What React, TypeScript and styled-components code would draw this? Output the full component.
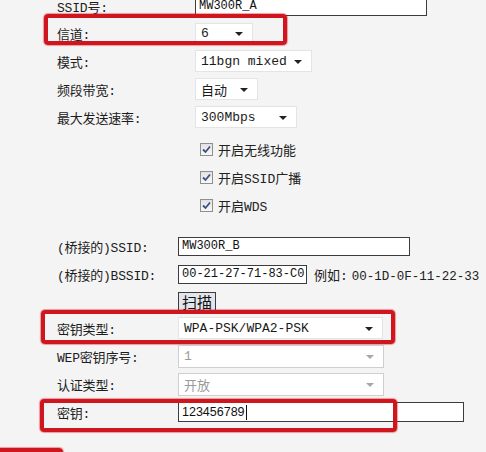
import React from 'react';
import styled, { createGlobalStyle, css } from 'styled-components';

const GlobalStyle = createGlobalStyle`
  html, body {
    margin: 0;
    padding: 0;
    background: #f4f4f4;
    overflow: hidden;
  }
  body {
    font-family: "Liberation Mono", "Noto Sans CJK SC", monospace;
    color: #222;
  }
`;

const Page = styled.div`
  width: 486px;
  height: 452px;
  overflow: hidden;
  background: #f4f4f4;
`;

const Section = styled.div<{ $top: number }>`
  margin-top: ${p => p.$top}px;
`;

interface IHighlight {
  left: number;
  top: number;
  width: number;
  height: number;
}

const highlightBox = (hl: IHighlight) => css`
  content: '';
  position: absolute;
  left: ${hl.left}px;
  top: ${hl.top}px;
  width: ${hl.width}px;
  height: ${hl.height}px;
  box-sizing: border-box;
  border: 4px solid #cf161f;
  border-radius: 4px;
  box-shadow: 0 0 1px 1px rgba(207, 22, 31, 0.4);
  pointer-events: none;
`;

const Row = styled.div<{ $h?: number; $labelW: number; $hl?: IHighlight }>`
  position: relative;
  display: grid;
  grid-template-columns: ${p => p.$labelW}px 1fr;
  align-items: center;
  height: ${p => p.$h ?? 28}px;
  padding-left: 57px;

  ${({ $hl }) => $hl ? css`
    &::after {
      ${highlightBox($hl)}
    }
  ` : ''}
`;

const Label = styled.span`
  font-size: 13px;
  white-space: nowrap;
  color: #1c1c1c;
  letter-spacing: -0.2px;
`;

const Control = styled.div`
  display: flex;
  align-items: center;
`;

const SelectBox = styled.div<{ $w: number; $h?: number; $disabled?: boolean }>`
  width: ${p => p.$w}px;
  height: ${p => p.$h ?? 22}px;
  box-sizing: border-box;
  display: flex;
  align-items: center;
  justify-content: space-between;
  padding: 0 9px 0 5px;
  background: #fff;
  border: 1px solid ${p => p.$disabled ? '#cfcfcf' : '#e4e4e4'};
  font-size: 13px;
  color: ${p => p.$disabled ? '#9a9a9a' : '#1a1a1a'};
  white-space: nowrap;
`;

const Arrow = styled.span<{ $disabled?: boolean }>`
  width: 0;
  height: 0;
  border-left: 4px solid transparent;
  border-right: 4px solid transparent;
  border-top: 4px solid ${p => p.$disabled ? '#a8a8a8' : '#222'};
  margin-top: 2px;
`;

const TextInput = styled.div<{ $w: number; $h?: number; $sans?: boolean }>`
  width: ${p => p.$w}px;
  height: ${p => p.$h ?? 19}px;
  box-sizing: border-box;
  display: flex;
  align-items: center;
  padding: 0 3px;
  background: #fff;
  border: 1px solid #3c3c3c;
  font-size: ${p => p.$sans ? 12.5 : 12}px;
  font-family: ${p => p.$sans
    ? '"Liberation Sans", "Noto Sans CJK SC", sans-serif'
    : '"Liberation Mono", "Noto Sans CJK SC", monospace'};
  color: #111;
  white-space: nowrap;
`;

const Caret = styled.span`
  display: inline-block;
  width: 1px;
  height: 15px;
  background: #111;
  margin-left: 1px;
`;

const Hint = styled.span`
  font-size: 13px;
  margin-left: 7px;
  color: #222;
  white-space: nowrap;
`;

const HintValue = styled.span`
  font-size: 12.5px;
  margin-left: 4px;
`;

const ScanButton = styled.div`
  width: 38px;
  height: 19px;
  box-sizing: border-box;
  display: flex;
  align-items: center;
  justify-content: center;
  border: 1px solid #3c3c3c;
  background: #e2e5ec;
  font-family: "Noto Sans CJK SC", sans-serif;
  font-size: 15px;
  line-height: 1;
  color: #111;
`;

const CheckRow = styled.div`
  display: flex;
  align-items: center;
  height: 28px;
  padding-left: 200px;
  gap: 5px;
  font-size: 13px;
`;

const CheckBox = styled.span`
  width: 13px;
  height: 13px;
  box-sizing: border-box;
  border: 1px solid #8e8f8f;
  background: linear-gradient(#e2e2e2, #f8f8f8);
  display: flex;
  align-items: center;
  justify-content: center;
`;

const Footer = styled.div`
  position: relative;
  height: 40px;
  margin-top: 22px;

  &::after {
    ${highlightBox({ left: -20, top: 0, width: 83, height: 40 })}
  }
`;

const Select: React.FC<{ value: string; w: number; h?: number; disabled?: boolean }> = ({
  value, w, h, disabled,
}) => (
  <SelectBox $w={w} $h={h} $disabled={disabled}>
    <span>{value}</span>
    <Arrow $disabled={disabled} />
  </SelectBox>
);

const Check: React.FC<{ label: string }> = ({ label }) => (
  <CheckRow>
    <CheckBox>
      <svg width="9" height="9" viewBox="0 0 9 9">
        <polyline points="1,4.5 3.5,7 8,1.5" fill="none" stroke="#3d5282" strokeWidth="1.8" />
      </svg>
    </CheckBox>
    <span>{label}</span>
  </CheckRow>
);

const App: React.FC = () => (
  <Page>
    <GlobalStyle />
    <Section $top={-7}>
      <Row $labelW={138} $h={26}>
        <Label>SSID号:</Label>
        <Control><TextInput $w={232} $h={20}>MW300R_A</TextInput></Control>
      </Row>
      <Row $labelW={138} $hl={{ left: 44, top: -5, width: 243, height: 31 }}>
        <Label>信道:</Label>
        <Control><Select value="6" w={58} h={20} /></Control>
      </Row>
      <Row $labelW={138}>
        <Label>模式:</Label>
        <Control><Select value="11bgn mixed" w={117} /></Control>
      </Row>
      <Row $labelW={138}>
        <Label>频段带宽:</Label>
        <Control><Select value="自动" w={63} /></Control>
      </Row>
      <Row $labelW={138}>
        <Label>最大发送速率:</Label>
        <Control><Select value="300Mbps" w={102} /></Control>
      </Row>
    </Section>
    <Section $top={4}>
      <Check label="开启无线功能" />
      <Check label="开启SSID广播" />
      <Check label="开启WDS" />
    </Section>
    <Section $top={13}>
      <Row $labelW={121}>
        <Label>(桥接的)SSID:</Label>
        <Control><TextInput $w={232}>MW300R_B</TextInput></Control>
      </Row>
      <Row $labelW={121}>
        <Label>(桥接的)BSSID:</Label>
        <Control>
          <TextInput $w={129}>00-21-27-71-83-C0</TextInput>
          <Hint>例如:<HintValue>00-1D-0F-11-22-33</HintValue></Hint>
        </Control>
      </Row>
      <Row $labelW={121} $h={26}>
        <span />
        <Control><ScanButton>扫描</ScanButton></Control>
      </Row>
      <Row $labelW={121} $hl={{ left: 41, top: -4, width: 354, height: 34 }}>
        <Label>密钥类型:</Label>
        <Control><Select value="WPA-PSK/WPA2-PSK" w={205} /></Control>
      </Row>
      <Row $labelW={121}>
        <Label>WEP密钥序号:</Label>
        <Control><Select value="1" w={206} h={23} disabled /></Control>
      </Row>
      <Row $labelW={121}>
        <Label>认证类型:</Label>
        <Control><Select value="开放" w={206} h={23} disabled /></Control>
      </Row>
      <Row $labelW={121} $hl={{ left: 40, top: 1, width: 357, height: 33 }}>
        <Label>密钥:</Label>
        <Control>
          <TextInput $w={286} $h={20} $sans>123456789<Caret /></TextInput>
        </Control>
      </Row>
    </Section>
    <Footer />
  </Page>
);

export default App;
